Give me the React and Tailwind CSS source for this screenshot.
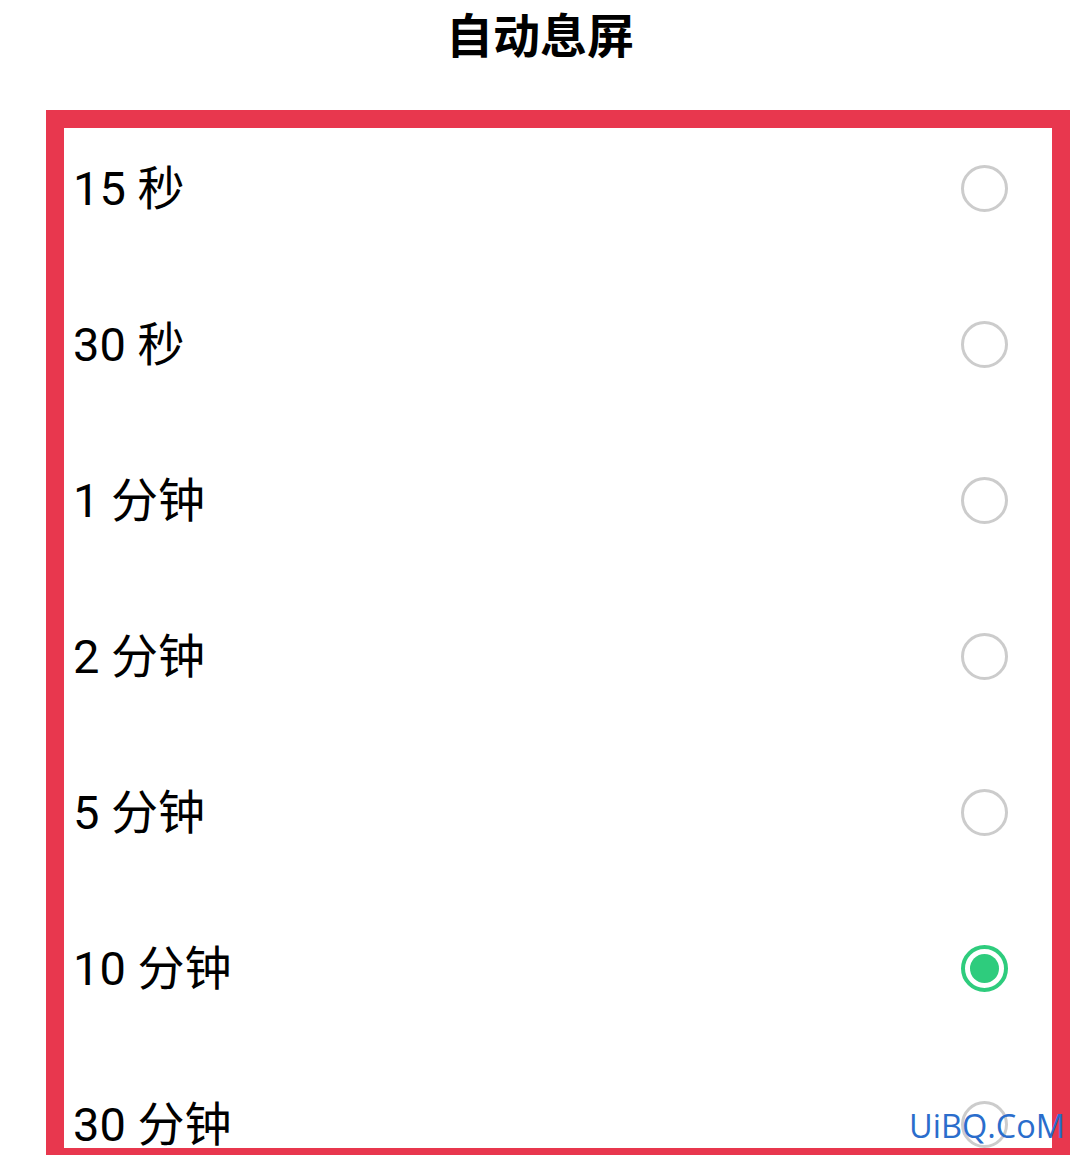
const options = ["15 秒", "30 秒", "1 分钟", "2 分钟", "5 分钟", "10 分钟", "30 分钟"];

function Radio(props) {
    if (props.checked) {
        return <div className="w-[47px] h-[47px] rounded-full border-[4px] border-[#2ecc7d] flex items-center justify-center">
            <div className="w-[29px] h-[29px] rounded-full bg-[#2ecc7d]"></div>
        </div>
    }
    return <div className="w-[47px] h-[47px] rounded-full border-[3px] border-[#cccccc]"></div>
}

export default function App() {
    return <div className="relative w-[1080px] h-[1155px] overflow-hidden bg-white text-black" style={{ fontFamily: "Roboto, 'Noto Sans CJK SC', sans-serif" }}>
        <div className="h-[110px] flex justify-center pt-[9px]">
            <div className="text-[47px] font-bold leading-[56px]">自动息屏</div>
        </div>
        <div className="ml-[46px] w-[1024px] h-[1056px] border-[18px] border-[#e8374e] overflow-hidden">
            <div className="-mt-[18px]">
                {options.map((o, i) => (
                    <div key={o} className="h-[156px] flex items-center justify-between pl-[9px] pr-[44px]">
                        <div className="text-[47px] leading-none">{o}</div>
                        <Radio checked={i === 5} />
                    </div>
                ))}
            </div>
        </div>
        <div className="absolute left-[909px] top-[1106px] text-[32.5px] text-[#2a6dcc] leading-[40px]" style={{ fontFamily: "'Open Sans', sans-serif" }}>UiBQ.CoM</div>
    </div>
}
